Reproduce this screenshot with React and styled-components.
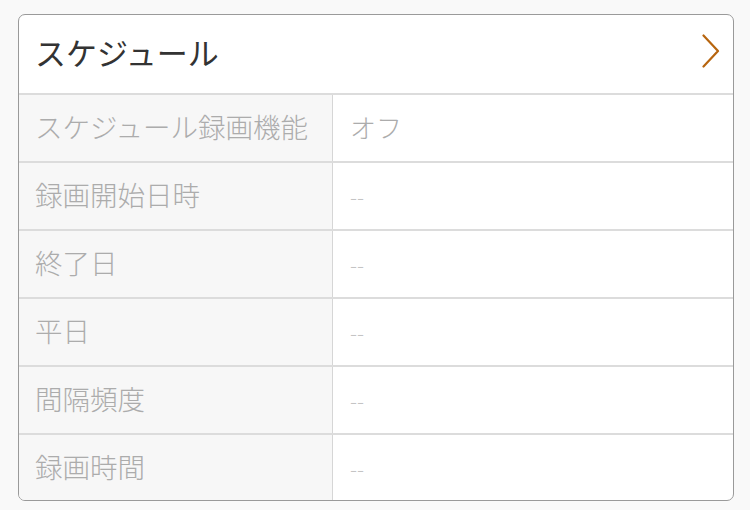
import React from 'react';
import styled, { createGlobalStyle } from 'styled-components';

const rows = [
  { label: 'スケジュール録画機能', value: 'オフ' },
  { label: '録画開始日時', value: '--' },
  { label: '終了日', value: '--' },
  { label: '平日', value: '--' },
  { label: '間隔頻度', value: '--' },
  { label: '録画時間', value: '--' },
];

function App() {
  return (
    <>
      <Global />
      <Page>
        <Card>
          <Header>
            <Title>スケジュール</Title>
            <Chevron viewBox="0 0 18 34" fill="none">
              <path d="M1.5 1.5 L16 17 L1.5 32.5" stroke="#b7650f" strokeWidth="2.2" strokeLinecap="round" strokeLinejoin="round" />
            </Chevron>
          </Header>
          {rows.map((r, i) => (
            <Row key={i} $last={i === rows.length - 1}>
              <Label>{r.label}</Label>
              <Value $dash={r.value === '--'}>{r.value}</Value>
            </Row>
          ))}
        </Card>
      </Page>
    </>
  );
}

const Global = createGlobalStyle`
  html, body {
    margin: 0;
    background: #f9f9f9;
    font-family: "Noto Sans CJK JP", "Noto Sans", sans-serif;
  }
`
const Page = styled.div`
  padding: 14px 16px 0 18px;
`
const Card = styled.div`
  width: 714px;
  border: 1px solid #9a9a9a;
  border-radius: 7px;
  background: #fff;
  overflow: hidden;
`
const Header = styled.div`
  height: 78px;
  display: flex;
  align-items: center;
  justify-content: space-between;
  padding: 0 13px 0 16px;
  border-bottom: 2px solid #dcdcdc;
`
const Title = styled.div`
  font-size: 31px;
  font-weight: 400;
  color: #333;
  line-height: 1;
  margin-top: -6px;
`
const Chevron = styled.svg`
  width: 18px;
  height: 34px;
  margin-top: -6px;
`
const Row = styled.div`
  display: grid;
  grid-template-columns: 314px 1fr;
  height: ${p => (p.$last ? '65px' : '66px')};
  border-bottom: ${p => (p.$last ? 'none' : '2px solid #dcdcdc')};
`
const Label = styled.div`
  display: flex;
  align-items: center;
  padding: 0 0 4px 16px;
  background: #f7f7f7;
  border-right: 1px solid #d6d6d6;
  font-size: 27.5px;
  font-weight: 300;
  color: #acacac;
`
const Value = styled.div`
  display: flex;
  align-items: center;
  padding: 0 0 ${p => (p.$dash ? '0' : '4px')} 17px;
  font-size: ${p => (p.$dash ? '21px' : '26px')};
  font-weight: 300;
  color: ${p => (p.$dash ? '#c4c4c4' : '#acacac')};
`

export default App;
